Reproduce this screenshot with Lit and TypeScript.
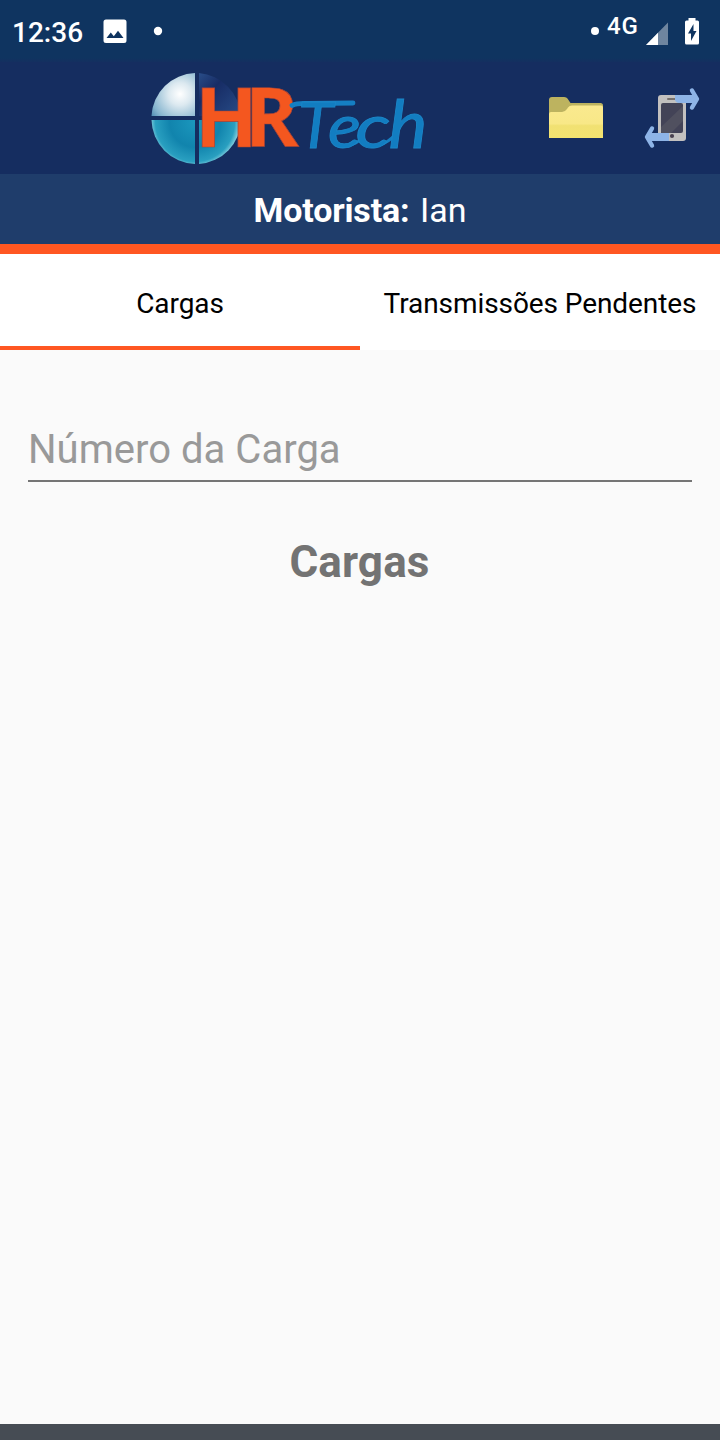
import { LitElement, html, css, svg } from "lit";
import { customElement, state } from "lit/decorators.js";

@customElement("status-bar")
class StatusBar extends LitElement {
  static styles = css`
    :host { display: flex; height: 62px; box-sizing: border-box; background: linear-gradient(#0f3460 0 58px, #142f60 62px); color: #fff; align-items: flex-start; }
    .time { font-size: 28px; font-weight: 500; line-height: 32px; padding: 17px 0 0 12px; width: 103px; box-sizing: border-box; }
    .left { width: 70px; height: 62px; }
    .net { font-size: 24px; font-weight: 500; line-height: 28px; padding-top: 12px; width: 39px; letter-spacing: 0.8px; margin-left: 8px; }
    .dot { width: 8px; height: 8px; border-radius: 50%; background: #fff; margin-top: 27px; }
    .end { display: flex; margin-left: auto; }
    .right { width: 74px; height: 62px; }
  `;
  render() {
    return html`
      <div class="time">12:36</div>
      <svg class="left" viewBox="103 0 70 62">
        <path fill="#fff" fill-rule="evenodd" d="M106 19.500h18q2.500 0 2.500 2.500v18.500q0 2.500-2.500 2.500h-18q-2.500 0-2.500-2.500V22q0-2.500 2.500-2.500ZM106.500 38h17l-5.500-7.200-4.200 5.400-3-3.600Z"/>
        <circle cx="158" cy="31" r="4.200" fill="#fff"/>
      </svg>
      <div class="end">
        <div class="dot"></div>
        <div class="net">4G</div>
        <svg class="right" viewBox="646 0 74 62">
          <path d="M668 22.500V45H646Z" fill="#fff" opacity=".4"/>
          <path d="M658 32.700V45H646Z" fill="#fff"/>
          <path fill="#fff" fill-rule="evenodd" d="M688.500 18h7v2.500h2q1.500 0 1.500 1.500v21q0 1.500-1.500 1.500h-11q-1.500 0-1.500-1.500V22q0-1.500 1.500-1.500h2ZM693.500 24l-5.500 9.500h3V41l5.500-10h-3Z"/>
        </svg>
      </div>`;
  }
}

@customElement("brand-logo")
class BrandLogo extends LitElement {
  static styles = css`
    :host { display: block; width: 290px; height: 112px; }
    svg { display: block; overflow: visible; }
    .hr { font: 700 82.500px/1 "Open Sans", sans-serif; fill: #f4571f; stroke: #a84438; stroke-width: .7px; }
    .tech { font: italic 400 60px/1 Lato, sans-serif; fill: #127dc1; stroke: #1b86c8; stroke-width: .8px; }
    .swash { fill: none; stroke: #157fc3; stroke-linecap: round; }
  `;
  render() {
    return html`<svg width="290" height="112" viewBox="145 62 290 112">
      <defs>
        <radialGradient id="tl" gradientUnits="userSpaceOnUse" cx="180" cy="94" r="38">
          <stop offset="0" stop-color="#fff"/><stop offset=".3" stop-color="#dce9f0"/><stop offset=".75" stop-color="#86b5cf"/><stop offset="1" stop-color="#4282ac"/>
        </radialGradient>
        <linearGradient id="tr" x1="0" y1="0" x2="1" y2="1">
          <stop offset="0" stop-color="#294d88"/><stop offset=".35" stop-color="#172c65"/><stop offset="1" stop-color="#284d88"/>
        </linearGradient>
        <radialGradient id="bt" gradientUnits="userSpaceOnUse" cx="195" cy="122" r="46">
          <stop offset="0" stop-color="#1b97bd"/><stop offset=".55" stop-color="#1184ad"/><stop offset=".86" stop-color="#299fc0"/><stop offset="1" stop-color="#9bdce7"/>
        </radialGradient>
      </defs>
      <path d="M195 73V116H151.500A45 45 0 0 1 195 73Z" fill="url(#tl)"/>
      <path d="M199 73A46 46 0 0 1 241 116H199Z" fill="url(#tr)"/>
      <path d="M151.500 120H195V164A45 45 0 0 1 151.500 120Z" fill="url(#bt)"/>
      <path d="M199 120H241A45 45 0 0 1 199 164Z" fill="url(#bt)"/>
      <text class="hr" x="194.800 244.400" y="147">HR</text>
      <path class="swash" d="M292 105.500Q297 103 308 103.500L353 103" stroke-width="4.800"/>
      <path class="swash" d="M350 145Q356 144 361 139" stroke-width="3"/>
      <path class="swash" d="M379 145Q388 143 397 133" stroke-width="3"/>
      <text class="tech" y="147.500"><tspan x="298" font-size="64.500">T</tspan><tspan x="328" textLength="33" lengthAdjust="spacingAndGlyphs">e</tspan><tspan x="355.500" textLength="35" lengthAdjust="spacingAndGlyphs">c</tspan><tspan x="388.500" font-size="65" textLength="39" lengthAdjust="spacingAndGlyphs">h</tspan></text>
    </svg>`;
  }
}

const folderIcon = svg`
  <defs><linearGradient id="f" x1="0" y1="0" x2="0" y2="1">
    <stop offset="0" stop-color="#fae98f"/><stop offset=".56" stop-color="#f8e887"/><stop offset=".62" stop-color="#f1e173"/><stop offset="1" stop-color="#f2e36f"/>
  </linearGradient></defs>
  <path d="M549 138V100q0-3 3-3h12q3 0 4.500 3l2 3h30q2.500 0 2.500 2.500V138Z" fill="#bdb35f"/>
  <path d="M549 138V114q0-2 2-2h11q3 0 5-3l1-1.500q1.500-2 4-2h29q2 0 2 2V138Z" fill="url(#f)"/>`;

const syncIcon = svg`
  <rect x="658" y="95" width="28" height="46" rx="3" fill="#c2c0bf"/>
  <path d="M661 105q0-2 2-2h18q2 0 2 2v26q0 2-2 2h-18q-2 0-2-2Z" fill="#434357"/>
  <path d="M683 106V121L671 133H661V127Z" fill="#50505f"/>
  <path d="M668 99h8" stroke="#77716e" stroke-width="2" stroke-linecap="round"/>
  <path d="M675 95h20l2 4-2 4H679q-3 0-4-3Z" fill="#8eb4e7"/>
  <path d="M692 90.500l5 8.500-5 8.500" fill="none" stroke="#8eb4e7" stroke-width="4.400" stroke-linecap="round" stroke-linejoin="round"/>
  <path d="M649 133h20v8h-20l-2-4Z" fill="#8eb4e7"/>
  <path d="M652 128.500l-5 8.500 5 8.500" fill="none" stroke="#8eb4e7" stroke-width="4.400" stroke-linecap="round" stroke-linejoin="round"/>
  <circle cx="672" cy="136" r="2.100" fill="#494150"/>`;

@customElement("app-root")
class AppRoot extends LitElement {
  @state() active = 0;
  static styles = css`
    :host { display: flex; flex-direction: column; height: 1440px; background: #fafafa; font-family: Roboto, sans-serif; overflow: hidden; }
    .toolbar { display: flex; flex: none; height: 112px; background: #152d60; padding-left: 145px; }
    .icon { height: 112px; display: block; }
    .folder { width: 60px; margin-left: 110px; }
    .sync { width: 60px; margin-left: 38px; }
    .driver { height: 70px; flex: none; background: #1f3d6b; color: #fff; font-size: 34px; line-height: 72px; text-align: center; white-space: pre; border-bottom: 10px solid #ff5722; }
    .driver b { letter-spacing: -0.15px; margin-right: 2px; }
    .tabs { display: grid; grid-template-columns: 1fr 1fr; height: 96px; flex: none; background: #fff; }
    .tab { font: 28px Roboto, sans-serif; padding: 8px 0 0; height: 96px; box-sizing: border-box; border: 0; border-bottom: 4px solid transparent; background: none; color: #000; line-height: 84px; letter-spacing: -0.08px; text-align: center; white-space: nowrap; }
    .selected { border-color: #ff5722; }
    .content { display: flex; flex-direction: column; flex: 1; padding: 70px 28px 0; }
    .field { font: 40px Roboto, sans-serif; height: 62px; box-sizing: border-box; border: 0; border-bottom: 2px solid #757575; background: none; padding: 0 0 1px; outline: 0; border-radius: 0; letter-spacing: 0.03px; }
    .field::placeholder { color: #999; opacity: 1; }
    .title { margin: 54px 0 0; font-size: 44px; font-weight: 700; line-height: 52px; letter-spacing: 0.15px; color: #737373; text-align: center; padding-right: 1px; }
    .nav { height: 16px; flex: none; background: #464c54; }
  `;
  render() {
    return html`
      <status-bar></status-bar>
      <div class="toolbar">
        <brand-logo></brand-logo>
        <svg class="icon folder" viewBox="545 62 60 112">${folderIcon}</svg>
        <svg class="icon sync" viewBox="643 62 60 112">${syncIcon}</svg>
      </div>
      <div class="driver"><b>Motorista:</b> Ian</div>
      <div class="tabs">
        ${["Cargas", "Transmissões Pendentes"].map((t, i) => html`<button class="tab ${i === this.active ? "selected" : ""}" @click=${() => (this.active = i)}>${t}</button>`)}
      </div>
      <div class="content">
        <input class="field" placeholder="Número da Carga">
        <h1 class="title">Cargas</h1>
      </div>
      <div class="nav"></div>`;
  }
}
